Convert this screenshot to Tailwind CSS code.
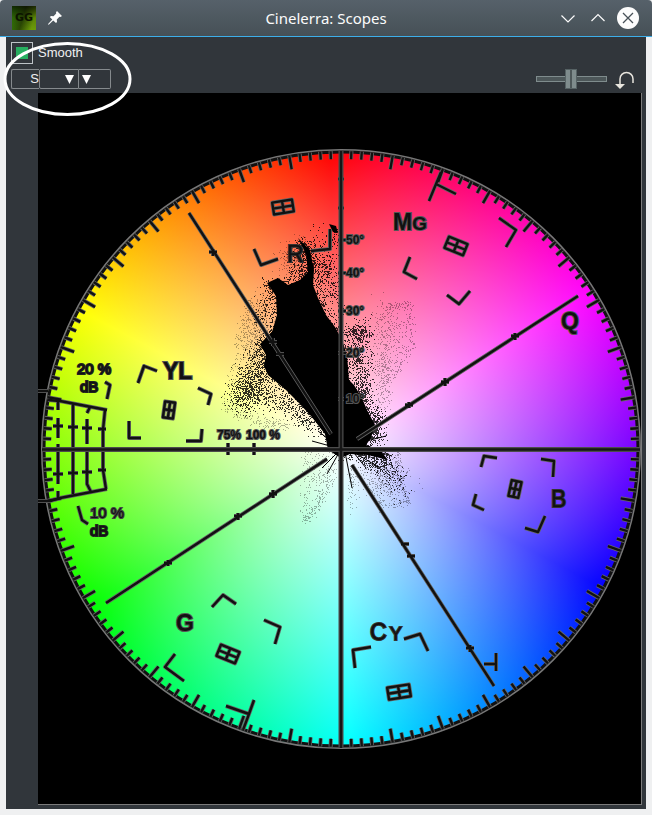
<!DOCTYPE html>
<html lang="en">
<head>
    <meta charset="UTF-8">
    <meta name="viewport" content="width=device-width, initial-scale=1.0">
    <title>Cinelerra: Scopes</title>
    <script src="https://cdn.jsdelivr.net/npm/@tailwindcss/browser@4"></script>
</head>
<body class="relative flex min-h-screen flex-col bg-[#eff0f1] font-['Liberation_Sans',sans-serif]">

    <!-- Title bar -->
    <header class="grid h-[37px] grid-cols-[1fr_auto_1fr] items-center rounded-t border-b border-[#3daee9] bg-linear-to-b from-[#56616a] to-[#465056] pr-3 pl-3">
        <div class="flex items-center gap-3">
            <svg class="h-6 w-6" viewBox="0 0 24 24">
                <defs>
                    <linearGradient id="logo" x1="0" y1="0" x2="1" y2="0.3">
                        <stop offset="0" stop-color="#388c08"/>
                        <stop offset="0.55" stop-color="#2c4a04"/>
                        <stop offset="1" stop-color="#6c9c08"/>
                    </linearGradient>
                    <linearGradient id="logoShade" x1="0" y1="0" x2="0" y2="1">
                        <stop offset="0" stop-color="#000" stop-opacity="0.7"/>
                        <stop offset="0.5" stop-color="#000" stop-opacity="0.15"/>
                        <stop offset="1" stop-color="#000" stop-opacity="0"/>
                    </linearGradient>
                </defs>
                <rect width="24" height="24" fill="url(#logo)"/>
                <rect width="24" height="24" fill="url(#logoShade)"/>
                <text x="12" y="15" text-anchor="middle" font-family="DejaVu Sans" font-weight="bold" font-size="11" fill="#0c1400">GG</text>
            </svg>
            <button class="h-[14px] w-[14px]" aria-label="Pin window">
                <svg viewBox="0 0 14 14" fill="#fcfcfc">
                    <path d="M9 0 L14 5 L12.500 6 L11.500 5.800 L8.800 8.500 L9 11 L8 12 L5.200 9.500 L1 13.500 L0 13.800 L0.300 12.800 L4.300 8.600 L1.800 6 L3 5 L5.500 5.200 L8.200 2.500 L8 1.300 Z"/>
                </svg>
            </button>
        </div>
        <h1 class="font-['Noto_Sans',sans-serif] text-[15px] leading-5 text-[#fcfcfc]">Cinelerra: Scopes</h1>
        <div class="flex items-center justify-end gap-4 pr-px">
            <button class="h-3.5 w-3.5" aria-label="Minimize">
                <svg viewBox="0 0 14 14" fill="none" stroke="#fcfcfc" stroke-width="1.2"><path d="M0.500 4.500 L7 11 L13.500 4.500"/></svg>
            </button>
            <button class="h-3.5 w-3.5" aria-label="Maximize">
                <svg viewBox="0 0 14 14" fill="none" stroke="#fcfcfc" stroke-width="1.2"><path d="M0.500 10 L7 3.500 L13.500 10"/></svg>
            </button>
            <button class="-ml-1 h-[22px] w-[22px]" aria-label="Close">
                <svg viewBox="0 0 22 22"><circle cx="11" cy="11" r="11" fill="#fcfcfc"/><path d="M6 6 L16 16 M16 6 L6 16" stroke="#475057" stroke-width="1.3"/></svg>
            </button>
        </div>
    </header>

    <main class="mx-1.5 mb-1.5 flex flex-1 flex-col bg-[#31363b] pt-[5px] pb-1">
        <!-- Toolbar -->
        <div class="flex items-center gap-[5px] pl-[5px]">
            <input id="smooth" type="checkbox" checked class="h-[22px] w-[22px] appearance-none border border-[#bdc3c7] p-1 checked:bg-[#27ae60] checked:bg-clip-content">
            <label for="smooth" class="text-[13px] leading-5 text-[#eff0f1]">Smooth</label>
        </div>
        <div class="mt-[5px] mb-1 flex h-5 items-center justify-between pr-[11px] pl-[5px]">
            <div class="flex h-5">
                <button class="flex w-7 items-center justify-end overflow-hidden rounded-l-xs border border-r-0 border-[#858a8d] text-[13px] leading-4 text-[#eff0f1]">S</button>
                <button class="flex w-10 items-center justify-end rounded-l-xs border border-[#858a8d] pr-1" aria-label="Scope type">
                    <svg class="h-[9px] w-[9px]" viewBox="0 0 9 9"><path d="M0 0 H9 L4.500 9 Z" fill="#fff"/></svg>
                </button>
                <button class="flex w-8 items-center rounded-r-xs border border-l-0 border-[#858a8d] pl-[3px]" aria-label="Scope settings">
                    <svg class="h-[9px] w-[9px]" viewBox="0 0 9 9"><path d="M0 0 H9 L4.500 9 Z" fill="#fff"/></svg>
                </button>
            </div>
            <div class="flex items-center gap-2">
                <input type="range" min="0" max="100" value="49" aria-label="Brightness" class="h-5 w-[71px] appearance-none bg-transparent [&::-webkit-slider-runnable-track]:h-[6px] [&::-webkit-slider-runnable-track]:border [&::-webkit-slider-runnable-track]:border-[#7f8c8d] [&::-webkit-slider-runnable-track]:bg-[#4d5759] [&::-webkit-slider-thumb]:-mt-[8px] [&::-webkit-slider-thumb]:h-5 [&::-webkit-slider-thumb]:w-3 [&::-webkit-slider-thumb]:appearance-none [&::-webkit-slider-thumb]:border [&::-webkit-slider-thumb]:border-[#566264] [&::-webkit-slider-thumb]:bg-[linear-gradient(90deg,#7f8c8d_4px,#4d5759_4px,#4d5759_6px,#7f8c8d_6px)]">
                <button class="h-5 w-5" aria-label="Reset">
                    <svg viewBox="0 0 20 20"><path d="M5 15 V10 A6.500 6.500 0 0 1 18 10 V14" fill="none" stroke="#e8e5de" stroke-width="1.500"/><path d="M0 15 H10 L5 20 Z" fill="#e8e5de"/></svg>
                </button>
            </div>
        </div>

        <!-- Vectorscope -->
        <div class="mr-1 ml-8 flex flex-1 items-center border-r border-b border-[#7b7b7b] bg-black">
            <svg class="w-full" viewBox="38 93 603 711">
                <foreignObject x="42" y="150" width="598" height="598">
                    <div class="h-full w-full rounded-full bg-[radial-gradient(closest-side,#fff,rgba(255,255,255,0)),conic-gradient(from_-2deg,#f00,#f0f,#00f,#0ff,#0f0,#ff0,#f00)]"></div>
                </foreignObject>

                <g id="cloud">
                    <path d="M267 283 L278 278 L288 285 L300 280 L308 272 L306 254 L298 238 L310 250 L314 270 L313 285 L318 298 L326 315 L335 327 L342 340 L347 355 L349 380 L354 385 L362 398 L367 410 L375 425 L371 438 L366 445 L380 450 L388 460 L368 455 L350 454 L341 458 L328 450 L325 434 L311 416 L298 402 L286 390 L268 375 L264 366 L266 355 L260 344 L272 332 L277 315 L276 296 Z"/>
                    <path d="M329 224 L336 226 L338 233 L333 232 Z"/>
                    <path id="dots" stroke="#000" stroke-opacity="0.8" shape-rendering="crispEdges" fill="none"/>
                    <path id="faint" stroke="#000" stroke-opacity="0.3" shape-rendering="crispEdges" fill="none"/>
                    <path d="M341 449 L327 474 M341 449 L322 468 M345 452 L352 488 M350 450 L380 468 M350 448 L366 468 M372 425 L380 418 M370 440 L386 436 M366 448 L392 456 M341 449 L312 441 M341 449 L318 431" stroke="#000" stroke-width="1"/>
                </g>

                <defs>
                    <g id="marks" fill="none">
                        <path id="ticks"/>
                        <!-- I and Q axes -->
                        <path d="M189 213 L331 434 M352 465 L494 686 M578 296 L357 439 M327 459 L106 603"/>
                        <path d="M209 252 h8 M213 249 v7 M269 342 h8 M273 338 v8 M276 354 h8 M401 544 h8 M407 556 h8 M466 648 h8 M470 645 v7 M511 336 h8 M515 333 v7 M441 382 h8 M445 378 v8 M405 405 h8 M409 402 v6 M269 494 h8 M273 490 v8 M234 516 h8 M238 513 v7 M164 563 h8 M168 560 v6"/>
                        <path d="M496 653 V671 M484 664 H496"/>
                        <!-- marks on the straight axes -->
                        <path d="M338 179 h6 M338 208 h6 M338 240 h8 M338 273 h8 M338 311 h8 M338 353 h8 M338 399 h6 M228 443 v12 M254 443 v12 M225 449 h6 M251 449 h6"/>
                        <!-- target corners -->
                        <path d="M138 383 L144 366 L157 371 M198 388 L211 394 L208 405 M129 421 V438 H141 M186 441 H201 L202 429"/>
                        <path d="M254 249 L261 265 L278 259 M311 251 L330 249 V229"/>
                        <path d="M429 201 L436 184 L456 194 M441 172 L436 184 M499 218 L516 230 L506 247 M410 257 L404 272 L417 279 M447 295 L459 304 L470 291"/>
                        <path d="M481 467 L484 456 L497 458 M541 459 L554 461 L553 477 M476 494 L473 505 L484 510 M525 528 L538 532 L545 516"/>
                        <path d="M212 607 L223 595 L236 604 M264 620 L280 627 L275 644 M175 654 L165 667 L184 681 M226 706 L249 714 L254 700 M249 714 L243 730"/>
                        <path d="M355 668 L353 650 L371 647 M404 639 L420 634 L428 651"/>
                        <!-- inner targets -->
                        <path d="M-10 -6 H10 V6 H-10 Z M-10 0 H10 M0 -6 V6" transform="translate(283 207) rotate(-9)"/>
                        <path d="M-10 -6 H10 V6 H-10 Z M-10 0 H10 M0 -6 V6" transform="translate(456 246) rotate(22)"/>
                        <path d="M-10 -6 H10 V6 H-10 Z M-10 0 H10 M0 -6 V6" transform="translate(228 654) rotate(22)"/>
                        <path d="M-11 -6 H11 V6 H-11 Z M-11 0 H11 M0 -6 V6" transform="translate(399 692) rotate(-9)"/>
                        <path d="M-5 -8 H5 V8 H-5 Z M-5 0 H5 M0 -8 V8" transform="translate(169 410) rotate(8)"/>
                        <path d="M-5 -8 H5 V8 H-5 Z M-5 0 H5 M0 -8 V8" transform="translate(515 489) rotate(12)"/>
                        <!-- gain and phase grid -->
                        <path d="M48 400 L60 401 L107 410 M50 501 L60 498 L107 489 M105 410 L103 430 V470 L106 489 M73 404 V494 M58 402 V410 M58 418 V438 M58 444 V484 M58 491 V498 M90 407 L87 413 M87 419 V444 M87 452 V484 L91 492 M38 391 H48 M38 501 H50"/>
                        <path d="M53 426 h10 M68 427 h10 M82 428 h10 M98 429 h8 M53 474 h10 M68 473 h10 M82 472 h10 M98 470 h8 M58 423 v6 M73 424 v6 M87 425 v6 M58 471 v6 M73 470 v6 M87 469 v6"/>
                        <path d="M105 382 L110 385 L107 399 M78 506 L82 520 L88 524"/>
                    </g>
                </defs>
                <circle cx="341" cy="449" r="299" fill="none" stroke="#777" stroke-width="2"/>
                <circle cx="341" cy="449" r="297" fill="none" stroke="#111" stroke-width="3"/>
                <use href="#marks" stroke="#666" stroke-width="4" stroke-linejoin="round"/>
                <use href="#marks" stroke="#111" stroke-width="2.400" stroke-linejoin="round"/>
                <path d="M341 151 V748 M42 449.500 H640" stroke="#4c4c4c" stroke-width="5"/>
                <path d="M341 151 V748 M42 449.500 H640" stroke="#161616" stroke-width="2.500"/>

                <g font-family="Liberation Sans, sans-serif" font-size="23" fill="#111" stroke="#555" stroke-width="2" paint-order="stroke">
                    <g font-weight="bold">
                        <text x="393" y="230">M<tspan font-size="19">G</tspan></text>
                        <text x="163" y="379">YL</text>
                        <text x="561" y="329">Q</text>
                        <text x="176" y="631">G</text>
                    </g>
                    <text x="287" y="262" stroke="#333">R</text>
                    <text x="551" y="507" stroke="#333">B</text>
                    <text x="370" y="640" stroke="#333">C<tspan font-size="18" dx="3">Y</tspan></text>
                    <g font-size="15">
                        <text x="77" y="374" stroke="#222">20 %</text>
                        <text x="80" y="392" stroke="#222">dB</text>
                        <text x="90" y="518" stroke="#444">10 %</text>
                        <text x="90" y="536" stroke="#222">dB</text>
                    </g>
                    <g font-size="12" font-weight="bold">
                        <text x="217" y="439">75%</text>
                        <text x="246" y="439">100 %</text>
                        <text x="346" y="244">50°</text>
                        <text x="346" y="277">40°</text>
                        <text x="346" y="315">30°</text>
                        <text x="346" y="357">20°</text>
                        <text x="346" y="403">10°</text>
                    </g>
                </g>
            </svg>
        </div>
    </main>

    <!-- Highlight ring over the toolbar buttons -->
    <svg class="pointer-events-none absolute top-[41px] left-[3px] h-[76px] w-[129px]" viewBox="0 0 129 76" fill="none">
        <ellipse cx="64.500" cy="38" rx="62.500" ry="35.500" stroke="#fff" stroke-width="3"/>
    </svg>

<script>
    // graticule ticks round the rim
    let ticks = "";
    for (let deg = 0; deg < 360; deg += 2) {
        const a = deg * Math.PI / 180;
        const inner = deg % 10 === 0 ? 284 : 290;
        ticks += `M${341 + 298 * Math.cos(a)} ${449 + 298 * Math.sin(a)}L${341 + inner * Math.cos(a)} ${449 + inner * Math.sin(a)}`;
    }
    document.getElementById("ticks").setAttribute("d", ticks);

    // fixed seed so the trace looks the same on every load
    let seed = 7;
    function rand() {
        seed = (seed * 16807) % 2147483647;
        return seed / 2147483647;
    }

    // soft-edged elliptical cloud of n dots, tilted by deg
    function blob(n, cx, cy, rx, ry, deg) {
        let d = "";
        const c = Math.cos(deg * Math.PI / 180), s = Math.sin(deg * Math.PI / 180);
        for (let i = 0; i < n; i++) {
            const u = (rand() + rand() + rand() - 1.5) * rx;
            const v = (rand() + rand() + rand() - 1.5) * ry;
            d += `M${Math.round(cx + u * c - v * s)} ${Math.round(cy + u * s + v * c)}.5h1`;
        }
        return d;
    }

    // dots thrown to both sides of an outline
    function fringe(points, n, spread) {
        let d = "";
        for (let i = 0; i < points.length - 1; i++) {
            for (let k = 0; k < n; k++) {
                const t = rand();
                const x = points[i][0] + t * (points[i + 1][0] - points[i][0]) + (rand() + rand() - 1) * spread;
                const y = points[i][1] + t * (points[i + 1][1] - points[i][1]) + (rand() + rand() - 1) * spread;
                d += `M${Math.round(x)} ${Math.round(y)}.5h1`;
            }
        }
        return d;
    }

    const edge = [[267, 283], [288, 284], [308, 268], [300, 242], [309, 250], [313, 285], [326, 315], [342, 340], [349, 380], [365, 402], [375, 425], [368, 445], [388, 460], [345, 455], [325, 434], [298, 402], [264, 370], [260, 344], [274, 330], [276, 296], [267, 283]];
    document.getElementById("dots").setAttribute("d",
        fringe(edge, 75, 8) +
        fringe([[335, 228], [331, 250], [336, 290], [340, 330]], 45, 8) +
        blob(330, 322, 272, 12, 36, -12) +
        blob(180, 302, 266, 14, 16, 0) +
        blob(520, 256, 372, 16, 30, 15) +
        blob(420, 246, 392, 18, 20, 20) +
        blob(220, 270, 398, 30, 12, 25) +
        blob(180, 300, 415, 24, 10, 45) +
        blob(120, 264, 310, 9, 24, 10) +
        blob(330, 358, 350, 12, 28, 5) +
        blob(160, 357, 332, 14, 6, 10) +
        blob(300, 364, 388, 9, 30, 0) +
        blob(220, 376, 428, 9, 20, 0) +
        blob(260, 374, 462, 24, 10, 30) +
        blob(70, 394, 482, 12, 18, -20));
    document.getElementById("faint").setAttribute("d",
        fringe([[252, 300], [240, 340], [225, 409]], 80, 8) +
        fringe([[225, 409], [262, 422], [290, 425]], 70, 7) +
        blob(420, 256, 335, 14, 34, 10) +
        blob(260, 295, 258, 16, 20, 10) +
        fringe([[385, 308], [408, 303], [412, 345], [390, 380]], 50, 6) +
        blob(260, 388, 335, 20, 36, 0) +
        blob(200, 384, 380, 9, 36, 0) +
        fringe([[306, 450], [304, 520], [318, 505], [333, 470]], 60, 6) +
        blob(120, 320, 475, 12, 28, 10) +
        blob(420, 384, 478, 26, 22, 40) +
        fringe([[397, 450], [400, 480], [407, 503], [375, 503]], 50, 5) +
        blob(80, 352, 480, 6, 30, 0));
</script>
</body>
</html>
